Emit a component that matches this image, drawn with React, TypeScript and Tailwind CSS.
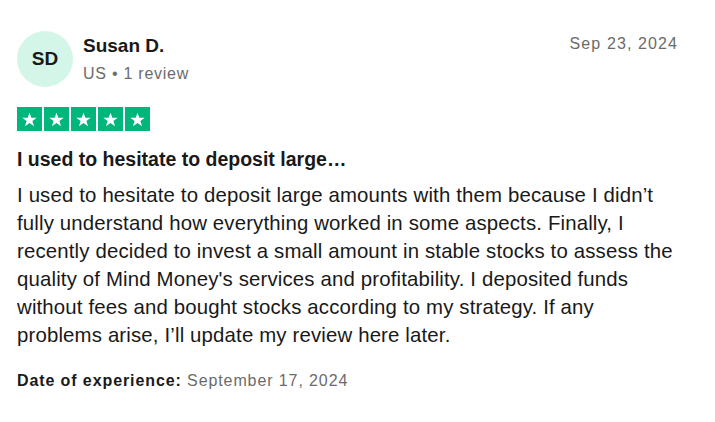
import React from "react";

function Star() {
  return (
    <div className="w-[25px] h-[24px] bg-[#00b67a] flex items-center justify-center">
      <svg width="17" height="17" viewBox="0 0 24 24">
        <path d="M12 2.5l2.6 7.2h7.6l-6.1 4.5 2.3 7.3L12 17l-6.4 4.5 2.3-7.3-6.1-4.5h7.6z" fill="#fff" />
      </svg>
    </div>
  );
}

export default function App() {
  return (
    <div className="w-[715px] h-[422px] bg-white text-[#191919]" style={{ fontFamily: '"Liberation Sans", Arial, sans-serif' }}>
      <div className="pl-[17px] pr-[37px] pt-[31px]">
        <div className="flex items-start justify-between">
          <div className="flex items-start gap-[10px]">
            <div className="w-[56px] h-[56px] rounded-full bg-[#d3f6e9] flex items-center justify-center text-[19px] font-bold text-[#191919]">
              SD
            </div>
            <div className="pt-[3px]">
              <div className="text-[19px] font-bold leading-[24px]">Susan D.</div>
              <div className="text-[16px] leading-[22px] text-[#6b6b6b] mt-[5px] tracking-[0.75px]">US • 1 review</div>
            </div>
          </div>
          <div className="text-[16px] leading-[22px] text-[#6b6b6b] pt-[2px] tracking-[1.1px]">Sep 23, 2024</div>
        </div>
        <div className="flex gap-[2px] mt-[20px]">
          <Star />
          <Star />
          <Star />
          <Star />
          <Star />
        </div>
        <div className="text-[19.5px] font-bold leading-[24px] mt-[16px]">I used to hesitate to deposit large…</div>
        <p className="w-[664px] text-[20.4px] leading-[28px] mt-[10px] tracking-[0.15px]">
          I used to hesitate to deposit large amounts with them because I didn’t fully understand how everything worked in some aspects. Finally, I recently decided to invest a small amount in stable stocks to assess the quality of Mind Money's services and profitability. I deposited funds without fees and bought stocks according to my strategy. If any problems arise, I’ll update my review here later.
        </p>
        <div className="text-[16px] leading-[20px] mt-[22px] tracking-[0.9px]">
          <span className="font-bold">Date of experience:</span> <span className="text-[#6b6b6b]">September 17, 2024</span>
        </div>
      </div>
    </div>
  );
}
